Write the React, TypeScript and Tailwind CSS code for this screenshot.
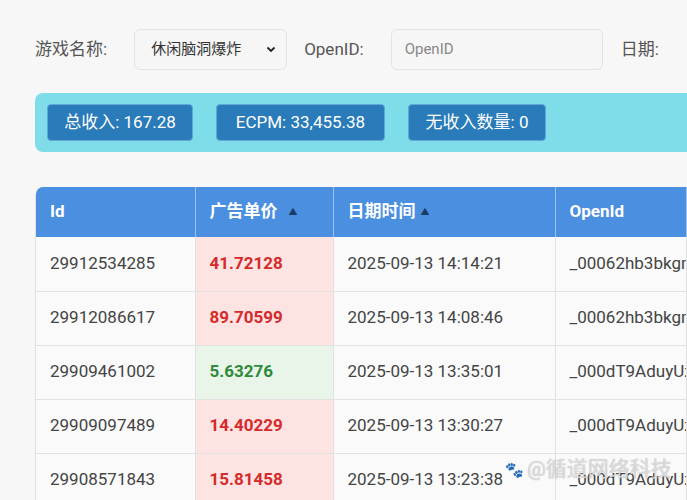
import React from 'react';

type Row = {
  id: string;
  price: string;
  high: boolean;
  time: string;
  openId: string;
};

const rows: Row[] = [
  { id: '29912534285', price: '41.72128', high: true, time: '2025-09-13 14:14:21', openId: '_00062hb3bkgm' },
  { id: '29912086617', price: '89.70599', high: true, time: '2025-09-13 14:08:46', openId: '_00062hb3bkgm' },
  { id: '29909461002', price: '5.63276', high: false, time: '2025-09-13 13:35:01', openId: '_000dT9AduyUz' },
  { id: '29909097489', price: '14.40229', high: true, time: '2025-09-13 13:30:27', openId: '_000dT9AduyUz' },
  { id: '29908571843', price: '15.81458', high: true, time: '2025-09-13 13:23:38', openId: '_000dT9AduyUz' },
];

function SortUp({ gap }: { gap: string }) {
  return <span className={`${gap} inline-block text-[9px] leading-none text-[#1c3a62] align-middle`}>▲</span>;
}

const statClass =
  'h-[37px] flex items-center justify-center rounded bg-[#2a7bb9] border border-[#5fa7d6] text-white text-[17px] whitespace-nowrap';

export default function App() {
  return (
    <div className="relative w-[687px] h-[500px] overflow-hidden bg-[#f7f7f7] font-['Roboto','Noto_Sans_CJK_SC',sans-serif] text-[#444]">
      <div className="pl-[35px] pt-[29px] w-[900px]">
        {/* Filters */}
        <div className="flex items-center h-[41px] text-[17px] text-[#555]">
          <span className="mr-[27px]">游戏名称:</span>
          <div className="flex items-center justify-between w-[153px] h-[41px] px-[16px] rounded-md border border-[#e4e4e4] bg-[#f6f6f6] text-[15px] text-[#333]">
            <span>休闲脑洞爆炸</span>
            <svg width="10" height="7" viewBox="0 0 10 7" className="mr-[-6px]">
              <path d="M1.5 1.5 L5 5 L8.5 1.5" fill="none" stroke="#222" strokeWidth="1.8" />
            </svg>
          </div>
          <span className="ml-[17px] mr-[27px]">OpenID:</span>
          <div className="flex items-center w-[212px] h-[41px] px-[13px] rounded-md border border-[#e4e4e4] bg-[#f6f6f6] text-[15px] text-[#888]">
            OpenID
          </div>
          <span className="ml-[18px] mr-[28px]">日期:</span>
          <div className="w-[180px] h-[41px] rounded-md border border-[#e4e4e4] bg-[#f6f6f6]" />
        </div>

        {/* Stats banner */}
        <div className="mt-[23px] h-[59px] w-[800px] rounded-lg bg-[#7fdde9] flex items-center gap-[23px] px-[12px]">
          <div className={`${statClass} w-[146px]`}>总收入: 167.28</div>
          <div className={`${statClass} w-[169px]`}>ECPM: 33,455.38</div>
          <div className={`${statClass} w-[138px]`}>无收入数量: 0</div>
        </div>

        {/* Table */}
        <div className="mt-[35px] w-[850px] rounded-tl-lg overflow-hidden border-l border-[#e2e2e2]">
          <table className="w-[850px] border-collapse table-fixed text-[17px]">
            <thead>
              <tr className="h-[50px] bg-[#4a8fe0] text-white font-bold text-left">
                <th className="w-[159px] px-[14px] border-r border-[#9cc2ef]">Id</th>
                <th className="w-[138px] px-[14px] border-r border-[#9cc2ef]">广告单价<SortUp gap="ml-[11px]" /></th>
                <th className="w-[222px] px-[14px] border-r border-[#9cc2ef]">日期时间<SortUp gap="ml-[5px]" /></th>
                <th className="w-[131px] px-[14px] border-r border-[#9cc2ef]">OpenId</th>
                <th className="w-[200px] px-[14px]"></th>
              </tr>
            </thead>
            <tbody>
              {rows.map((r) => (
                <tr key={r.id} className="h-[54px] bg-[#fafafa] border-b border-[#e2e2e2]">
                  <td className="px-[14px] border-r border-[#e2e2e2]">{r.id}</td>
                  <td
                    className={
                      r.high
                        ? 'px-[14px] border-r border-[#e2e2e2] bg-[#fde3e2] text-[#d52b2b] font-bold'
                        : 'px-[14px] border-r border-[#e2e2e2] bg-[#e9f5e9] text-[#2f8a3b] font-bold'
                    }
                  >
                    {r.price}
                  </td>
                  <td className="px-[14px] border-r border-[#e2e2e2] whitespace-nowrap">{r.time}</td>
                  <td className="px-[14px] border-r border-[#e2e2e2] whitespace-nowrap overflow-hidden">{r.openId}</td>
                  <td className="px-[14px]"></td>
                </tr>
              ))}
            </tbody>
          </table>
        </div>
      </div>

      {/* Watermark overlay */}
      <div className="absolute left-[505px] top-[454px] flex items-center gap-[3px] text-[21px] text-white/60 [text-shadow:0_0_1px_#999] pointer-events-none">
        <span className="text-[15px] text-[#bbb]">🐾</span>
        <span>@循道网络科技</span>
      </div>
    </div>
  );
}
